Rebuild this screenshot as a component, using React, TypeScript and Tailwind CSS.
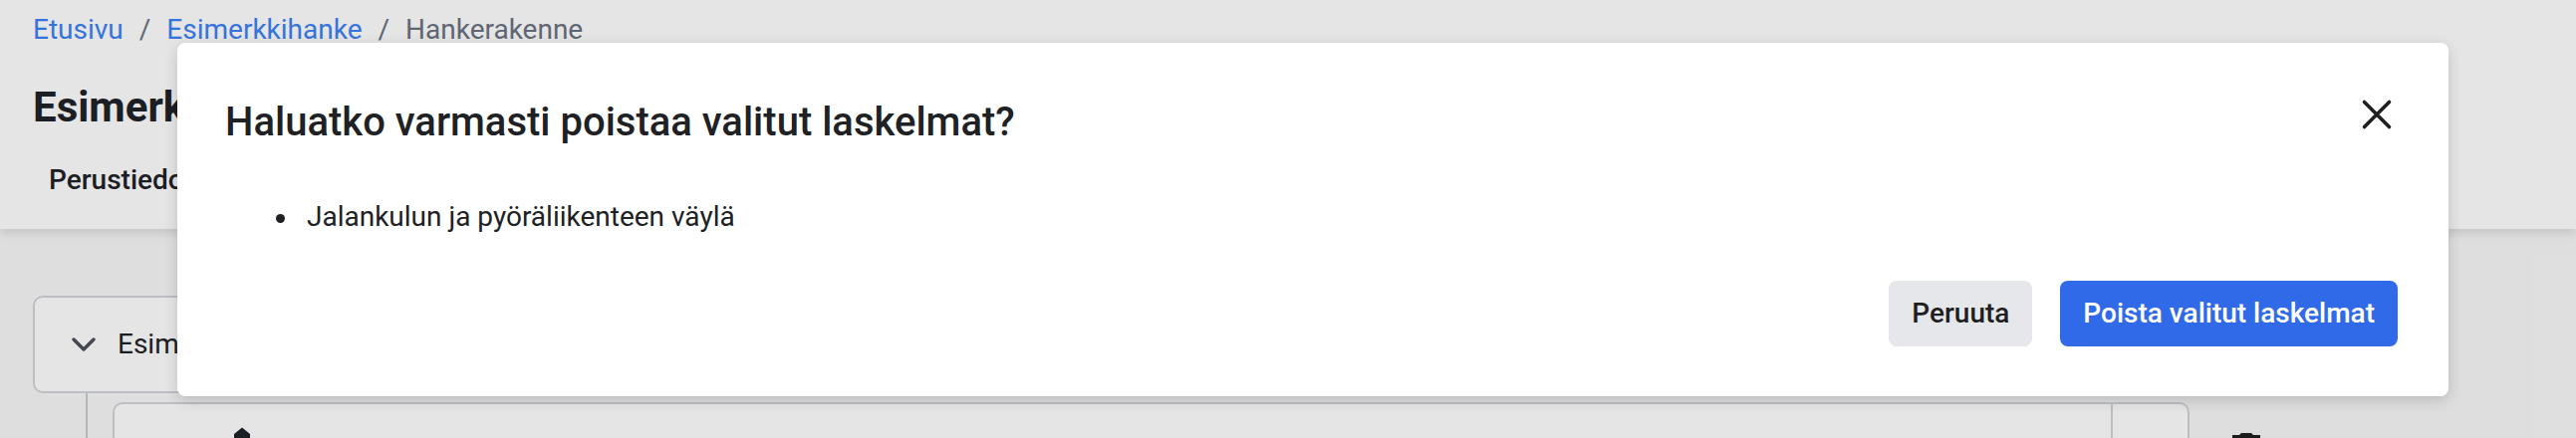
import React from "react";

function ChevronDown() {
  return (
    <svg width="24" height="14" viewBox="0 0 24 14" fill="none" aria-hidden="true">
      <path d="M2 2l10 10L22 2" stroke="#4b5058" strokeWidth="3.4" strokeLinecap="round" strokeLinejoin="round" />
    </svg>
  );
}

function CloseIcon() {
  return (
    <svg width="48" height="48" viewBox="0 0 48 48" fill="none" aria-hidden="true">
      <path d="M11.5 11.5l25 25M36.5 11.5l-25 25" stroke="#1f1f1f" strokeWidth="3.6" strokeLinecap="round" />
    </svg>
  );
}

function TrashIcon() {
  return (
    <svg width="48" height="48" viewBox="0 0 24 24" fill="#1f1f1f" aria-hidden="true">
      <path d="M6 19c0 1.1.9 2 2 2h8c1.1 0 2-.9 2-2V7H6v12zM19 4h-3.5l-1-1h-5l-1 1H5v2h14V4z" />
    </svg>
  );
}

function HandleIcon() {
  return (
    <svg width="20" height="12" viewBox="0 0 20 12" fill="#1f2328" aria-hidden="true">
      <path d="M10 1.5L18 8v4H2V8z" />
    </svg>
  );
}

export default function App() {
  return (
    <div className="relative h-[440px] w-[2586px] overflow-hidden bg-[#f8f8f8] [font-family:Roboto,'Liberation_Sans',sans-serif] text-[#1f2328]">
      {/* Page header */}
      <header className="relative z-[1] h-[230px] bg-white px-[33px] shadow-[0_4px_10px_rgba(0,0,0,0.12)]">
        <nav className="flex items-center pt-[10px] text-[28px] leading-[40px]">
          <a className="text-[#3b82f6]">Etusivu</a>
          <span className="mx-[16px] text-[#6b7280]">/</span>
          <a className="text-[#3b82f6]">Esimerkkihanke</a>
          <span className="mx-[16px] text-[#6b7280]">/</span>
          <span className="text-[#6b7280]">Hankerakenne</span>
        </nav>
        <h1 className="mt-[33px] text-[42px] font-bold leading-[50px] text-[#1f2328]">Esimerkkihanke</h1>
        <div className="mt-[28px] flex gap-[48px] px-[16px] text-[28px] font-medium leading-[40px]">
          <span>Perustiedot</span>
          <span>Hankerakenne</span>
        </div>
      </header>

      {/* Structure tree */}
      <main className="flex px-[33px] pt-[67px]">
        <div className="w-[2165px] shrink-0">
          <div className="flex h-[98px] items-center rounded-[10px] border-2 border-[#d1d5db] bg-white pl-[37px]">
            <ChevronDown />
            <span className="ml-[22px] text-[28px] leading-[40px]">Esimerkkihanke</span>
          </div>
          <div className="flex h-[200px]">
            <div className="w-[80px] shrink-0">
              <div className="ml-[53px] h-full w-[2px] bg-[#c9cbcf]" />
            </div>
            <div className="flex-1 pt-[9px]">
              <div className="flex h-[110px] rounded-[10px] border-2 border-[#d1d5db] bg-white">
                <div className="flex-1 border-r-2 border-[#d1d5db] pl-[118px] pt-[22px]">
                  <HandleIcon />
                </div>
                <div className="w-[75px]" />
              </div>
            </div>
          </div>
        </div>
        <div className="flex-1 pl-[33px] pt-[132px]">
          <TrashIcon />
        </div>
      </main>

      {/* Modal overlay */}
      <div className="absolute inset-0 z-10 bg-black/10">
        <div className="absolute left-[178px] top-[43px] w-[2280px] rounded-[8px] bg-white shadow-[0_4px_14px_rgba(0,0,0,0.16)]">
          <div className="px-[48px] pb-[50px] pt-[48px]">
            <div className="flex items-start justify-between">
              <h2 className="text-[40px] font-medium leading-[64px] text-[#202124]">
                Haluatko varmasti poistaa valitut laskelmat?
              </h2>
              <button className="flex h-[48px] w-[48px] items-center justify-center">
                <CloseIcon />
              </button>
            </div>
            <ul className="mt-[43px] pl-[51px]">
              <li className="flex items-center text-[28px] leading-[40px] text-[#202124]">
                <span className="mr-[22px] mt-[3px] h-[9px] w-[9px] rounded-full bg-[#202124]" />
                Jalankulun ja pyöräliikenteen väylä
              </li>
            </ul>
            <div className="mt-[44px] flex justify-end gap-[28px] pr-[3px]">
              <button className="h-[66px] w-[144px] rounded-[8px] bg-[#e5e7eb] text-[28px] font-medium text-[#1f1f1f]">
                Peruuta
              </button>
              <button className="h-[66px] rounded-[8px] bg-[#316ae8] px-[23px] text-[28px] font-medium text-white">
                Poista valitut laskelmat
              </button>
            </div>
          </div>
        </div>
      </div>
    </div>
  );
}
